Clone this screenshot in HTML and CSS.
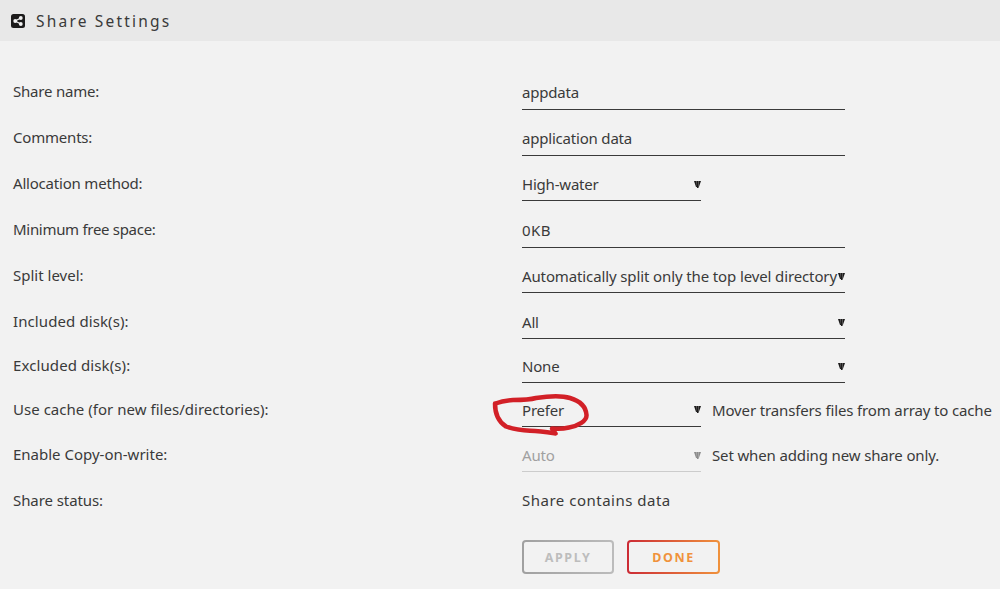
FILE: index.html
```html
<!DOCTYPE html>
<html lang="en">
<head>
	<meta charset="UTF-8" />
	<title>Share Settings</title>
	<link rel="stylesheet" href="styles.css">
</head>
<body>
	<svg class="defs" width="0" height="0">
		<symbol id="arrow" viewBox="0 0 7 7">
			<path d="M0 0H2.1L2.9 6H2ZM2.4 0H4.500V7H3ZM4.800 0H7L4.700 6.400Z" fill="currentColor" />
		</symbol>
	</svg>
	<div class="title">
		<svg class="shareIcon" viewBox="0 0 14 14">
			<rect width="14" height="14" rx="2.5" fill="#1c1b1b" />
			<path d="M9.8 4L4.2 7L9.8 10" fill="none" stroke="#f2f2f2" stroke-width="1.3" />
			<circle cx="4.2" cy="7" r="1.9" fill="#f2f2f2" />
			<circle cx="9.8" cy="4" r="1.9" fill="#f2f2f2" />
			<circle cx="9.8" cy="10" r="1.9" fill="#f2f2f2" />
		</svg>
		<span>Share Settings</span>
	</div>
	<form action="">
		<div class="line"><label>Share name:</label><div class="field"><span>appdata</span></div></div>
		<div class="line"><label>Comments:</label><div class="field"><span>application data</span></div></div>
		<div class="line method"><label>Allocation method:</label><div class="field select narrow"><span>High-water</span><svg class="arrow"><use href="#arrow" /></svg></div></div>
		<div class="line space"><label>Minimum free space:</label><div class="field"><span>0KB</span></div></div>
		<div class="line split"><label>Split level:</label><div class="field select"><span>Automatically split only the top level directory</span><svg class="arrow"><use href="#arrow" /></svg></div></div>
		<div class="line included"><label>Included disk(s):</label><div class="field select"><span>All</span><svg class="arrow"><use href="#arrow" /></svg></div></div>
		<div class="line excluded"><label>Excluded disk(s):</label><div class="field select"><span>None</span><svg class="arrow"><use href="#arrow" /></svg></div></div>
		<div class="line cache">
			<label>Use cache (for new files/directories):</label>
			<div class="field select narrow"><span>Prefer</span><svg class="arrow"><use href="#arrow" /></svg></div>
			<div class="hint">Mover transfers files from array to cache</div>
			<svg class="mark" viewBox="490 390 102 48">
				<path d="M495.5 403.5C501 401.5 507 400.5 513 400C523 400 529 400 536 398C546 396.5 560 395 570 398C580 401 586 407 586.5 415C587 421 578 426 569 427.5C563 429 556 429 552 428.5L555.5 433.5C546 432 540 431 530 430.7C520 430.5 511 428.5 506 426.5C498 421.5 495 414 495 403.5" />
			</svg>
		</div>
		<div class="line cow"><label>Enable Copy-on-write:</label><div class="field select narrow disabled"><span>Auto</span><svg class="arrow"><use href="#arrow" /></svg></div><div class="hint">Set when adding new share only.</div></div>
		<div class="line status"><label>Share status:</label><div class="text">Share contains data</div></div>
		<div class="buttons">
			<button type="button" class="apply" disabled>APPLY</button>
			<button type="button" class="done">DONE</button>
		</div>
	</form>
</body>
</html>
```
FILE: styles.css
```css
* {
	box-sizing: border-box;
}
body {
	margin: 0;
	height: 589px;
	overflow: hidden;
	background-color: #f2f2f2;
	color: #3a3a3a;
	font-family: "Noto Sans", sans-serif;
	font-size: 15px;
	line-height: 20px;
	letter-spacing: -0.2px;
}
.defs {
	display: block;
}
.title {
	display: flex;
	align-items: center;
	height: 41px;
	padding: 0 0 0 11px;
	background-color: #e8e8e8;
	font-size: 15.5px;
	letter-spacing: 2.2px;
}
.shareIcon {
	width: 14px;
	height: 14px;
	margin-right: 11px;
}
form {
	padding: 23px 0 0 13px;
}
.line {
	display: grid;
	grid-template-columns: 509px auto 1fr;
	align-items: end;
	position: relative;
	height: 46px;
	white-space: nowrap;
}
.line label {
	padding-bottom: 9px;
}
.field {
	display: flex;
	align-items: center;
	width: 323px;
	height: 34px;
	padding-bottom: 1px;
	border-bottom: 1px solid #3a3a3a;
}
.field span {
	flex: 1;
}
.select {
	height: 33px;
	padding-bottom: 0;
}
.narrow {
	width: 179px;
}
.arrow {
	width: 7px;
	height: 7px;
	color: #1c1b1b;
}
.hint {
	padding: 0 0 7px 11px;
	letter-spacing: -0.14px;
}
.method,.split {
	height: 45px;
}
.space {
	height: 47px;
}
.space label {
	letter-spacing: -0.3px;
}
.space .field {
	letter-spacing: 0.4px;
}
.method label {
	padding-bottom: 8px;
}
.split label,.included label,.excluded label {
	padding-bottom: 8px;
}
.split label {
	letter-spacing: 0;
}
.split .field {
	letter-spacing: -0.12px;
}
.included label,.excluded label {
	letter-spacing: 0.1px;
}
.excluded {
	height: 44px;
}
.cache {
	height: 44px;
}
.cache label {
	padding-bottom: 8px;
	letter-spacing: 0.03px;
}
.cache .field {
	height: 34px;
}
.cache .hint {
	padding-bottom: 7px;
}
.cow {
	height: 45px;
}
.cow label {
	padding-bottom: 8px;
	letter-spacing: 0;
}
.disabled {
	color: #a0a0a0;
	border-color: #cccccc;
}
.disabled .arrow {
	color: #8c8c8c;
}
.mark {
	position: absolute;
	left: 477px;
	top: 7px;
	width: 102px;
	height: 48px;
	z-index: 1;
}
.mark path {
	fill: none;
	stroke: #d22027;
	stroke-width: 4.5;
	stroke-linecap: round;
	stroke-linejoin: round;
}
.status {
	height: 38px;
}
.status label {
	padding-bottom: 0;
	letter-spacing: -0.08px;
}
.status .text {
	letter-spacing: 0.5px;
}
.buttons {
	display: flex;
	gap: 13px;
	padding: 30px 0 0 509px;
}
.buttons button {
	width: 92px;
	height: 34px;
	padding: 0;
	border: 2px solid transparent;
	border-radius: 4px;
	font-family: "Noto Sans", sans-serif;
	font-size: 12.5px;
	font-weight: bold;
	letter-spacing: 1.6px;
}
.buttons .apply {
	color: #bdbdbd;
	background: linear-gradient(#f2f2f2,#f2f2f2) padding-box,linear-gradient(90deg,#a0a0a0,#bcbcbc) border-box;
}
.buttons .done {
	width: 93px;
	color: #f0923c;
	background: linear-gradient(#f2f2f2,#f2f2f2) padding-box,linear-gradient(90deg,#cc2b35,#f0923c) border-box;
}
```
